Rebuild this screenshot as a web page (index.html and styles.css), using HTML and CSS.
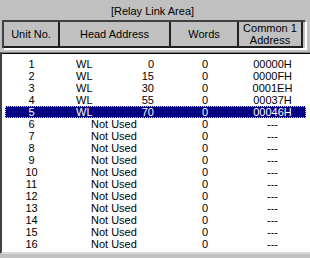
FILE: index.html
```html
<!DOCTYPE html>
<html>
<head>
<meta charset="utf-8">
<link rel="stylesheet" href="styles.css">
</head>
<body>
<div class="panel">
  <div class="title">[Relay Link Area]</div>
  <div class="header">
    <div class="hcell c1">Unit No.</div>
    <div class="hcell c2">Head Address</div>
    <div class="hcell c3">Words</div>
    <div class="hcell c4">Common 1<br>Address</div>
  </div>
  <div class="list">
    <div class="row"><span class="unit">1</span><span class="head"><span class="wl">WL</span><span class="num">0</span></span><span class="words">0</span><span class="common">00000H</span></div>
    <div class="row"><span class="unit">2</span><span class="head"><span class="wl">WL</span><span class="num">15</span></span><span class="words">0</span><span class="common">0000FH</span></div>
    <div class="row"><span class="unit">3</span><span class="head"><span class="wl">WL</span><span class="num">30</span></span><span class="words">0</span><span class="common">0001EH</span></div>
    <div class="row"><span class="unit">4</span><span class="head"><span class="wl">WL</span><span class="num">55</span></span><span class="words">0</span><span class="common">00037H</span></div>
    <div class="row selected"><span class="unit">5</span><span class="head"><span class="wl">WL</span><span class="num">70</span></span><span class="words">0</span><span class="common">00046H</span></div>
    <div class="row"><span class="unit">6</span><span class="head"><span class="unused">Not Used</span></span><span class="words">0</span><span class="common">---</span></div>
    <div class="row"><span class="unit">7</span><span class="head"><span class="unused">Not Used</span></span><span class="words">0</span><span class="common">---</span></div>
    <div class="row"><span class="unit">8</span><span class="head"><span class="unused">Not Used</span></span><span class="words">0</span><span class="common">---</span></div>
    <div class="row"><span class="unit">9</span><span class="head"><span class="unused">Not Used</span></span><span class="words">0</span><span class="common">---</span></div>
    <div class="row"><span class="unit">10</span><span class="head"><span class="unused">Not Used</span></span><span class="words">0</span><span class="common">---</span></div>
    <div class="row"><span class="unit">11</span><span class="head"><span class="unused">Not Used</span></span><span class="words">0</span><span class="common">---</span></div>
    <div class="row"><span class="unit">12</span><span class="head"><span class="unused">Not Used</span></span><span class="words">0</span><span class="common">---</span></div>
    <div class="row"><span class="unit">13</span><span class="head"><span class="unused">Not Used</span></span><span class="words">0</span><span class="common">---</span></div>
    <div class="row"><span class="unit">14</span><span class="head"><span class="unused">Not Used</span></span><span class="words">0</span><span class="common">---</span></div>
    <div class="row"><span class="unit">15</span><span class="head"><span class="unused">Not Used</span></span><span class="words">0</span><span class="common">---</span></div>
    <div class="row"><span class="unit">16</span><span class="head"><span class="unused">Not Used</span></span><span class="words">0</span><span class="common">---</span></div>
  </div>
</div>
</body>
</html>
```

FILE: styles.css
```css
html, body {
  margin: 0;
  padding: 0;
  background: #c0c0c0;
  overflow: hidden;
}
body {
  width: 310px;
  height: 258px;
  font-family: "Liberation Sans", Arial, sans-serif;
  font-size: 11px;
  color: #000;
}
.panel {
  display: flex;
  flex-direction: column;
}
.title {
  width: 305px;
  text-align: center;
  padding-top: 5px;
  line-height: 12px;
  height: 15px;
}
.header {
  margin-left: 2px;
  width: 301px;
  display: grid;
  grid-template-columns: 56px 111px 68px 64px;
  border-top: 2px solid #404040;
  border-left: 2px solid #404040;
  box-shadow: 2px 2px 0 #ffffff;
}
.hcell {
  border-right: 2px solid #202020;
  border-bottom: 2px solid #202020;
  height: 24px;
  line-height: 12px;
  display: flex;
  align-items: center;
  justify-content: center;
  text-align: center;
}
.c4 {
  align-items: flex-start;
}
.list {
  margin-top: 4px;
  background: #fff;
  border-top: 1px solid #808080;
  border-left: 2px solid #404040;
  border-bottom: 2px solid #d8d8d8;
  box-shadow: inset 0 1px 0 #000;
  padding: 5px 0 2px 3px;
}
.row {
  width: 301px;
  height: 12px;
  line-height: 12px;
  display: grid;
  grid-template-columns: 53px 113px 68px 67px;
  white-space: nowrap;
}
.row.selected {
  background: #000080;
  color: #fff;
  outline: 1px dotted #c8c8ff;
  outline-offset: -1px;
}
.unit, .words, .common {
  text-align: center;
}
.head {
  display: flex;
  padding-left: 18px;
  padding-right: 17px;
}
.wl {
  flex: 1;
}
.num {
  text-align: right;
}
.unused {
  padding-left: 15px;
}
```
